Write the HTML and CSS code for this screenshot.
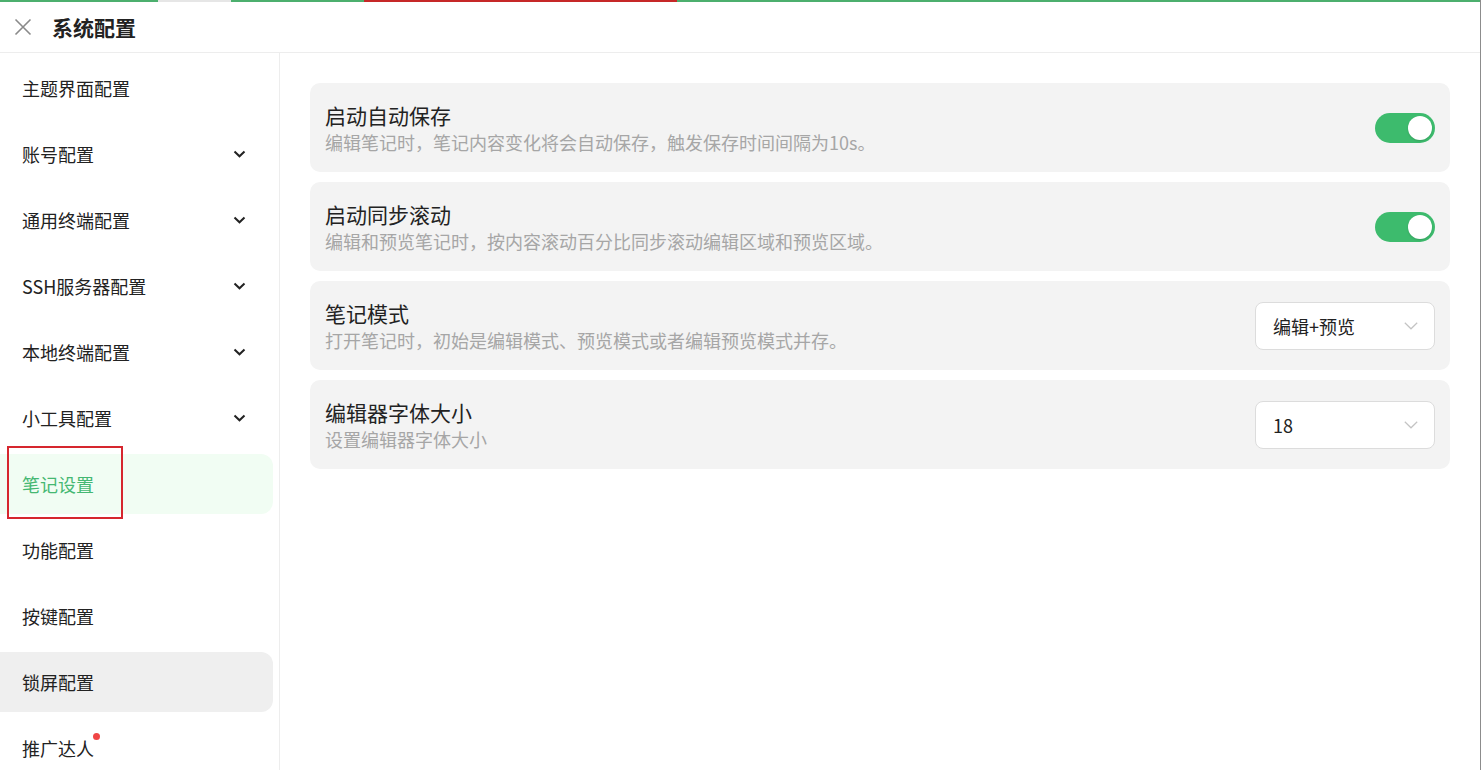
FILE: index.html
```html
<!DOCTYPE html>
<html lang="zh-CN">
<head>
    <meta charset="UTF-8">
    <meta name="viewport" content="width=device-width, initial-scale=1.0">
    <title>系统配置</title>
    <link rel="stylesheet" href="styles.css">
</head>
<body>
    <div class="page">
      <div class="top-line"></div>

      <div class="header">
        <svg class="close-icon" width="18" height="18" viewBox="0 0 18 18">
          <path d="M1.5 1.5 L16.5 16.5 M16.5 1.5 L1.5 16.5" stroke="#8a8a8a" stroke-width="1.6" fill="none"/>
        </svg>
        <h1 class="title">系统配置</h1>
      </div>

      <div class="main">
        <div class="sidebar">
          <div class="nav-item"><span>主题界面配置</span></div>
          <div class="nav-item"><span>账号配置</span><svg class="chevron" width="13" height="8" viewBox="0 0 13 8"><path d="M1.5 1.5 L6.5 6.3 L11.5 1.5" stroke="#222" stroke-width="2" fill="none"/></svg></div>
          <div class="nav-item"><span>通用终端配置</span><svg class="chevron" width="13" height="8" viewBox="0 0 13 8"><path d="M1.5 1.5 L6.5 6.3 L11.5 1.5" stroke="#222" stroke-width="2" fill="none"/></svg></div>
          <div class="nav-item"><span>SSH服务器配置</span><svg class="chevron" width="13" height="8" viewBox="0 0 13 8"><path d="M1.5 1.5 L6.5 6.3 L11.5 1.5" stroke="#222" stroke-width="2" fill="none"/></svg></div>
          <div class="nav-item"><span>本地终端配置</span><svg class="chevron" width="13" height="8" viewBox="0 0 13 8"><path d="M1.5 1.5 L6.5 6.3 L11.5 1.5" stroke="#222" stroke-width="2" fill="none"/></svg></div>
          <div class="nav-item"><span>小工具配置</span><svg class="chevron" width="13" height="8" viewBox="0 0 13 8"><path d="M1.5 1.5 L6.5 6.3 L11.5 1.5" stroke="#222" stroke-width="2" fill="none"/></svg></div>
          <div class="nav-item active"><span>笔记设置</span><div class="mark-box"></div></div>
          <div class="nav-item"><span>功能配置</span></div>
          <div class="nav-item"><span>按键配置</span></div>
          <div class="nav-item hover"><span>锁屏配置</span></div>
          <div class="nav-item"><span class="with-dot">推广达人<i class="dot"></i></span></div>
        </div>

        <div class="content">
          <div class="setting">
            <div class="setting-text">
              <div class="setting-title">启动自动保存</div>
              <div class="setting-desc">编辑笔记时，笔记内容变化将会自动保存，触发保存时间间隔为10s。</div>
            </div>
            <div class="switch on"><div class="knob"></div></div>
          </div>

          <div class="setting">
            <div class="setting-text">
              <div class="setting-title">启动同步滚动</div>
              <div class="setting-desc">编辑和预览笔记时，按内容滚动百分比同步滚动编辑区域和预览区域。</div>
            </div>
            <div class="switch on"><div class="knob"></div></div>
          </div>

          <div class="setting">
            <div class="setting-text">
              <div class="setting-title">笔记模式</div>
              <div class="setting-desc">打开笔记时，初始是编辑模式、预览模式或者编辑预览模式并存。</div>
            </div>
            <div class="select">
              <span>编辑+预览</span>
              <svg width="14" height="8" viewBox="0 0 14 8"><path d="M0.8 0.8 L7 6.8 L13.2 0.8" stroke="#c4c4c4" stroke-width="1.2" fill="none"/></svg>
            </div>
          </div>

          <div class="setting">
            <div class="setting-text">
              <div class="setting-title">编辑器字体大小</div>
              <div class="setting-desc">设置编辑器字体大小</div>
            </div>
            <div class="select">
              <span>18</span>
              <svg width="14" height="8" viewBox="0 0 14 8"><path d="M0.8 0.8 L7 6.8 L13.2 0.8" stroke="#c4c4c4" stroke-width="1.2" fill="none"/></svg>
            </div>
          </div>
        </div>
      </div>
    </div>
</body>
</html>
```

FILE: styles.css
```css
    html, body {
        margin: 0;
        height: 100%;
        overflow: hidden;
    }

    body {
        background-color: #fff;
        font-family: "Microsoft YaHei", "Noto Sans CJK SC", sans-serif;
        color: #222;
    }

    .page {
        height: 100vh;
        display: flex;
        flex-direction: column;
        border-right: 1px solid #8c8c8c;
        box-sizing: border-box;
    }

    .top-line {
        height: 2px;
        flex-shrink: 0;
        background: linear-gradient(to right,
            #4caf6e 0, #4caf6e 158px,
            #e6e6e6 158px, #e6e6e6 231px,
            #4caf6e 231px, #4caf6e 364px,
            #c62828 364px, #c62828 677px,
            #4caf6e 677px);
    }

    .header {
        height: 50px;
        flex-shrink: 0;
        display: flex;
        align-items: center;
        padding-left: 14px;
        border-bottom: 1px solid #ededed;
    }

    .close-icon {
        margin-right: 20px;
    }

    .title {
        margin: 0;
        font-size: 21px;
        font-weight: bold;
        color: #222;
    }

    .main {
        flex: 1;
        display: flex;
        min-height: 0;
    }

    .sidebar {
        width: 280px;
        flex-shrink: 0;
        border-right: 1px solid #ededed;
        padding-top: 5px;
        box-sizing: border-box;
    }

    .nav-item {
        position: relative;
        height: 60px;
        margin: 0 6px 6px 0;
        padding: 0 27px 0 22px;
        display: flex;
        align-items: center;
        justify-content: space-between;
        font-size: 18px;
        border-radius: 0 12px 12px 0;
    }

    .nav-item.active {
        background-color: #f1fdf3;
        color: #45b872;
    }

    .nav-item.hover {
        background-color: #efefef;
    }

    /* red annotation box around the selected item */
    .mark-box {
        position: absolute;
        left: 7px;
        top: -8px;
        width: 112px;
        height: 69px;
        border: 2px solid #d6262e;
    }

    .with-dot {
        position: relative;
    }

    .dot {
        position: absolute;
        right: -6px;
        top: -2px;
        width: 7px;
        height: 7px;
        border-radius: 50%;
        background-color: #f04545;
    }

    .content {
        flex: 1;
        padding: 30px;
        display: flex;
        flex-direction: column;
        gap: 10px;
    }

    .setting {
        height: 89px;
        box-sizing: border-box;
        padding: 0 15px;
        background-color: #f3f3f3;
        border-radius: 10px;
        display: flex;
        align-items: center;
        justify-content: space-between;
    }

    .setting-title {
        font-size: 21px;
        line-height: 28px;
        color: #222;
    }

    .setting-desc {
        font-size: 18px;
        line-height: 26px;
        color: #a6a6a6;
    }

    .switch {
        width: 60px;
        height: 30px;
        border-radius: 15px;
        background-color: #3dbb6d;
        position: relative;
        margin-top: 1px;
    }

    .switch .knob {
        position: absolute;
        right: 3px;
        top: 3px;
        width: 24px;
        height: 24px;
        border-radius: 50%;
        background-color: #fff;
        box-shadow: 0 1px 2px rgba(0, 0, 0, 0.15);
    }

    .select {
        width: 180px;
        height: 48px;
        box-sizing: border-box;
        padding: 0 16px 0 17px;
        background-color: #fff;
        border: 1px solid #dcdcdc;
        border-radius: 8px;
        display: flex;
        align-items: center;
        justify-content: space-between;
        font-size: 18px;
        color: #222;
    }
```
